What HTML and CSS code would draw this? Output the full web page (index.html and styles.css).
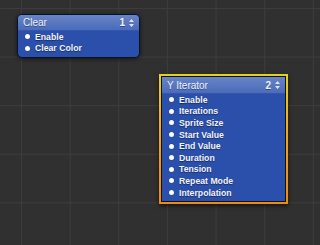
FILE: index.html
```html
<!DOCTYPE html>
<html>
	<head>
		<meta charset="utf-8">
		<title>Patch Editor</title>
		<link rel="stylesheet" href="styles.css">
	</head>
	<body>
		<div class="canvas">
			<div class="node node_clear">
				<div class="node_head">
					<span class="node_title">Clear</span>
					<span class="node_index">1
						<svg class="stepper" width="5" height="8" viewBox="0 0 5 8"><path d="M2.5 0 L5 3 L0 3 Z M0 5 L5 5 L2.5 8 Z" fill="#dde4f4"/></svg>
					</span>
				</div>
				<ul class="ports">
					<li>Enable</li>
					<li>Clear Color</li>
				</ul>
			</div>

			<div class="selection sel_iter">
				<div class="node">
					<div class="node_head">
						<span class="node_title">Y Iterator</span>
						<span class="node_index">2
							<svg class="stepper" width="5" height="8" viewBox="0 0 5 8"><path d="M2.5 0 L5 3 L0 3 Z M0 5 L5 5 L2.5 8 Z" fill="#dde4f4"/></svg>
						</span>
					</div>
					<ul class="ports">
						<li>Enable</li>
						<li>Iterations</li>
						<li>Sprite Size</li>
						<li>Start Value</li>
						<li>End Value</li>
						<li>Duration</li>
						<li>Tension</li>
						<li>Repeat Mode</li>
						<li>Interpolation</li>
					</ul>
				</div>
			</div>
		</div>
	</body>
</html>
```

FILE: styles.css
```css
body {
	margin: 0;
}

ul,
li {
	list-style: none;
	margin: 0;
	padding: 0;
}

.canvas {
	position: relative;
	width: 320px;
	height: 245px;
	overflow: hidden;
	background-color: #303030;
	background-image:
		linear-gradient(to right, #3c3c3c 1px, transparent 1px),
		linear-gradient(to bottom, #3c3c3c 1px, transparent 1px);
	background-size: 48.65px 48.6px;
	background-position: 21px 8px;
	font-family: "Liberation Sans", Arial, sans-serif;
}

.node {
	border: 1px solid #0a1228;
	border-radius: 5px;
	background-color: #2b50ab;
	box-shadow: 0 1px 4px rgba(0, 0, 0, 0.6);
	overflow: hidden;
}

/* nodes sit on a free canvas */
.node_clear {
	position: absolute;
	left: 17px;
	top: 14px;
	width: 121px;
}

.selection {
	position: absolute;
	padding: 2px;
	background: linear-gradient(to bottom, #e6d21c, #f3a014 55%, #f08a0c);
	box-shadow: 0 2px 4px rgba(0, 0, 0, 0.6);
}

.selection>.node {
	border-radius: 0;
	box-shadow: none;
}

.sel_iter {
	left: 159px;
	top: 74px;
	width: 125px;
}

.node_head {
	display: flex;
	align-items: center;
	justify-content: space-between;
	height: 15px;
	padding: 0 5px;
	background: linear-gradient(to bottom, #6884c8, #4b6bb9);
	border-bottom: 1px solid #3556a9;
	color: #eef2fb;
	font-size: 10px;
	text-shadow: 0 1px 0 rgba(0, 0, 0, 0.35);
}

.sel_iter .node_head {
	height: 16px;
}

.node_index {
	display: flex;
	align-items: center;
	gap: 4px;
	font-weight: bold;
	font-size: 10px;
}

.ports {
	padding: 0 0 3px 0;
}

.ports>li {
	display: flex;
	align-items: center;
	height: 11.6px;
	padding-left: 7px;
	color: #f2f4fb;
	font-size: 8.7px;
	font-weight: bold;
	text-shadow: 0 1px 1px rgba(0, 0, 0, 0.45);
	white-space: nowrap;
}

.ports>li::before {
	content: "";
	width: 5px;
	height: 5px;
	border-radius: 50%;
	background-color: #ffffff;
	margin-right: 5px;
	box-shadow: 0 0 1px rgba(0, 0, 0, 0.5);
}
```
